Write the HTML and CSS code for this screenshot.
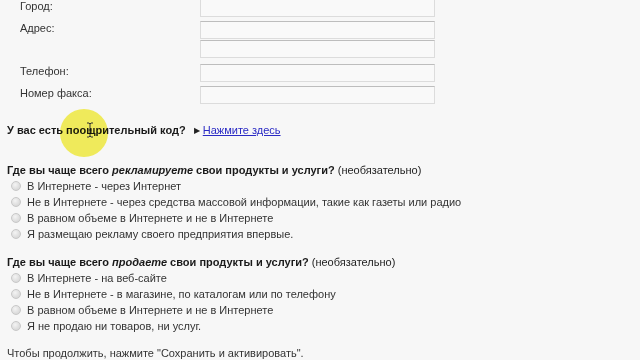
FILE: index.html
```html
<!DOCTYPE html>
<html lang="ru">
<head>
    <meta charset="UTF-8">
    <title>Информация о компании</title>
    <link rel="stylesheet" href="styles.css">
</head>
<body>
    <div class="page">
        <div class="form-rows">
            <div class="form-row">
                <label class="form-label">Город:</label>
                <div class="form-fields"><input class="text-input" type="text"></div>
            </div>
            <div class="form-row">
                <label class="form-label">Адрес:</label>
                <div class="form-fields">
                    <input class="text-input" type="text">
                    <input class="text-input" type="text">
                </div>
            </div>
            <div class="form-row row-spaced">
                <label class="form-label">Телефон:</label>
                <div class="form-fields"><input class="text-input" type="text"></div>
            </div>
            <div class="form-row">
                <label class="form-label">Номер факса:</label>
                <div class="form-fields"><input class="text-input" type="text"></div>
            </div>
        </div>

        <div class="promo">
            <b>У вас есть поощрительный код?</b>
            <span class="promo-arrow">&#9654;</span><a href="#" class="promo-link">Нажмите здесь</a>
            <div class="cursor-spot">
                <svg class="ibeam" width="8" height="16" viewBox="0 0 8 16">
                    <path d="M1 1h2l1 1 1-1h2M4 2v12M1 15h2l1-1 1 1h2M2.5 8h3" fill="none" stroke="#333" stroke-width="1"/>
                </svg>
            </div>
        </div>

        <div class="question">
            <div class="question-title"><b>Где вы чаще всего <i>рекламируете</i> свои продукты и услуги?</b> (необязательно)</div>
            <div class="option"><span class="radio"></span>В Интернете - через Интернет</div>
            <div class="option"><span class="radio"></span>Не в Интернете - через средства массовой информации, такие как газеты или радио</div>
            <div class="option"><span class="radio"></span>В равном объеме в Интернете и не в Интернете</div>
            <div class="option"><span class="radio"></span>Я размещаю рекламу своего предприятия впервые.</div>
        </div>

        <div class="question question-second">
            <div class="question-title"><b>Где вы чаще всего <i>продаете</i> свои продукты и услуги?</b> (необязательно)</div>
            <div class="option"><span class="radio"></span>В Интернете - на веб-сайте</div>
            <div class="option"><span class="radio"></span>Не в Интернете - в магазине, по каталогам или по телефону</div>
            <div class="option"><span class="radio"></span>В равном объеме в Интернете и не в Интернете</div>
            <div class="option"><span class="radio"></span>Я не продаю ни товаров, ни услуг.</div>
        </div>

        <div class="footer-note">Чтобы продолжить, нажмите "Сохранить и активировать".</div>
    </div>
</body>
</html>
```
FILE: styles.css
```css
* {
    box-sizing: border-box;
}

body {
    margin: 0;
    padding: 0;
    height: 100vh;
    background-color: #f7f7f7;
    color: #222;
    font-family: 'Liberation Sans', Arial, sans-serif;
    font-size: 11px;
    overflow: hidden;
}

.page {
    padding: 0 0 0 7px;
    margin-top: -1px;
}

.form-rows {
    display: flex;
    flex-direction: column;
    gap: 4px;
}

.form-row {
    display: flex;
}

.row-spaced {
    margin-top: 2px;
}

.form-label {
    width: 193px;
    padding: 1px 0 0 13px;
    color: #333;
    line-height: 13px;
}

.form-fields {
    display: flex;
    flex-direction: column;
    gap: 1px;
}

.text-input {
    display: block;
    width: 235px;
    height: 18px;
    margin: 0;
    background-color: #f9f9f9;
    border: 1px solid #dcdcdc;
    border-top-color: #bdbdbd;
    border-radius: 0;
}

.promo {
    position: relative;
    margin-top: 18px;
    line-height: 16px;
    font-size: 11px;
}

.promo b {
    color: #1a1a1a;
}

.promo-arrow {
    font-size: 8px;
    margin: 0 3px 0 5px;
    color: #222;
    vertical-align: 1px;
}

.promo-link {
    color: #2a2ac4;
    text-decoration: underline;
}

.cursor-spot {
    position: absolute;
    left: 53px;
    top: -13px;
    width: 48px;
    height: 48px;
    border-radius: 50%;
    background-color: rgba(244, 238, 40, 0.75);
    mix-blend-mode: multiply;
}

.ibeam {
    position: absolute;
    left: 26px;
    top: 13px;
}

.question {
    margin-top: 23px;
    line-height: 16px;
}

.question-second {
    margin-top: 12px;
}

.question-title b {
    color: #1a1a1a;
}

.option {
    display: flex;
    align-items: center;
    padding-left: 4px;
    color: #333;
}

.radio {
    width: 10px;
    height: 10px;
    margin-right: 6px;
    border-radius: 50%;
    border: 1px solid #c8c8c8;
    background: radial-gradient(circle at 40% 35%, #f4f4f4 0, #dadada 70%, #d0d0d0 100%);
}

.footer-note {
    margin: 11px 0 0 -7px;
    padding: 0 0 1px 7px;
    line-height: 16px;
    color: #333;
    border-bottom: 1px solid #dcdcdc;
}
```
